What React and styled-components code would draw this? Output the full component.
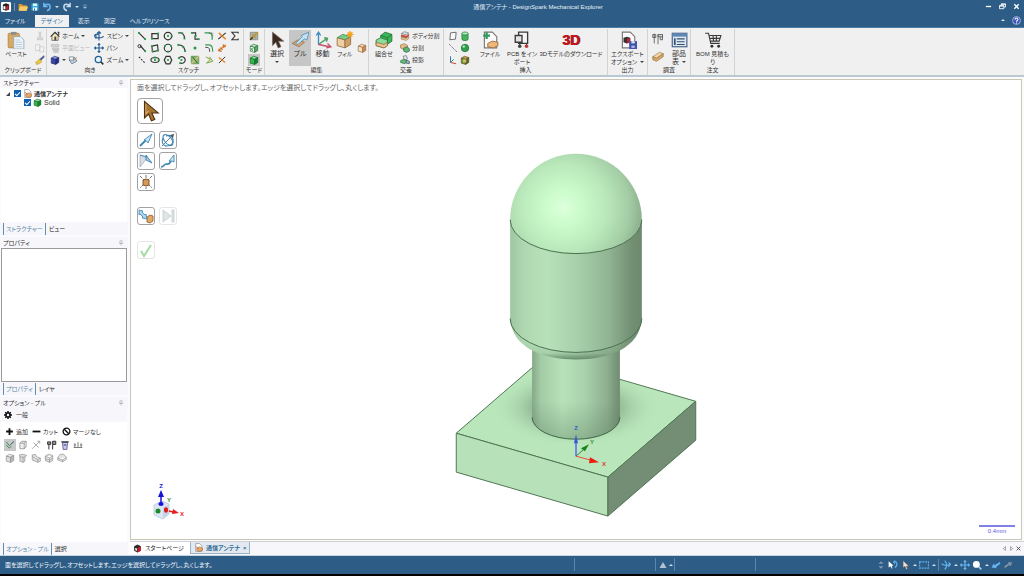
import React, { useState } from "react";
import styled, { createGlobalStyle, ThemeProvider } from "styled-components";

const theme = {
  blue: "#2d5d87",
  ribbon: "#f0f0f0",
  line: "#d2d2d2",
  panel: "#f7f6fa",
  ink: "#303030",
  font: '"Liberation Sans", "Noto Sans CJK JP", sans-serif',
};

const Global = createGlobalStyle`
  * { box-sizing: border-box; }
  body { margin: 0; background: #000; }
  body, button, input {
    font-family: ${theme.font};
    font-size: 7px;
    line-height: 8px;
    font-feature-settings: "palt";
    color: ${theme.ink};
  }
  button { border: 0; background: none; padding: 0; margin: 0; white-space: nowrap; }
  h1, h2, h3, p, ul { margin: 0; padding: 0; font-size: inherit; font-weight: normal; }
`;

/* ---------- icons ---------- */

const G = "#2f9a50";
const K = "#333";
const B = "#3c86b4";
const O = "#e8872e";

const cube = (a, b, c, s) => (
  <g stroke={s} strokeWidth="1" strokeLinejoin="round">
    <path d="M2 5 7 2l7 2-5 3z" fill={a} />
    <path d="M2 5l7 2v8l-7-2z" fill={b} />
    <path d="M9 7l5-3v8l-5 3z" fill={c} />
  </g>
);
const ends = (pts) => pts.map(([x, y]) => <rect key={`${x}-${y}`} x={x - 1.5} y={y - 1.5} width="3" height="3" fill={G} />);
const page = <path d="M3 1h7l4 4v10H3z" fill="#fdfdfd" stroke="#777" />;

const drawings = {
  app: <><rect width="16" height="16" rx="2" fill="#fff" /><path d="M3 4l5-2 5 2v8l-5 2-5-2z" fill="#222" /><path d="M8 7l4-2v6l-4 2z" fill="#c3202f" /><path d="M4 6l3 1v5l-3-1z" fill="#fff" /></>,
  folder: <><path d="M1 3h5l2 2h6v9H1z" fill="#d9962c" /><path d="M3 7h13l-2 7H1z" fill="#f8cb6a" /></>,
  save: <><path d="M1 1h14v14H1z" fill="#35aee8" /><path d="M4 1h8v5H4z" fill="#e7f6ff" /><path d="M4 9h8v6H4z" fill="#fff" /><path d="M6 11h2v4H6z" fill="#357" /></>,
  undo: <path d="M3 1v6h6M3 7c4-5 10-4 10 1 0 3-2 5-5 6" fill="none" stroke="#6db8f2" strokeWidth="2.4" />,
  redo: <path d="M13 1v6H7M13 7C9 2 3 3 3 8c0 3 2 5 5 6" fill="none" stroke="#c9dcec" strokeWidth="2.4" />,
  customise: <path d="M3 3h10M4 8l4 4 4-4z" fill="#a9c2d6" stroke="#a9c2d6" strokeWidth="1.5" />,
  minimise: <path d="M2 8h12" stroke="#fff" strokeWidth="3" />,
  restore: <path d="M5 6V2h10v7h-4M1 6h10v7H1zM1 7h10M5 3h10" fill="none" stroke="#fff" strokeWidth="2" />,
  close: <path d="M3 3l10 10M13 3L3 13" stroke="#fff" strokeWidth="3" />,
  help: <><circle cx="8" cy="8" r="7" fill="#3b55b8" stroke="#a9b6e8" strokeWidth="1.6" /><path d="M5.5 6.5c0-4 5.500-3.500 5 0-.2 1.500-2.500 1.500-2.500 3.500M8 11.500v1.800" stroke="#fff" strokeWidth="1.800" fill="none" /></>,
  paste: <><rect x="1" y="2" width="10" height="13" rx="1" fill="#d9a860" stroke="#a8783a" strokeWidth=".6" /><rect x="3.500" y=".8" width="5" height="2.600" fill="#8d8d8d" /><path d="M6 5h6l3 3v8H6z" fill="#eef5fb" stroke="#8aa4ba" strokeWidth=".7" /><path d="M7.500 8h4M7.500 10h6M7.500 12h6M7.500 14h6" stroke="#a8bfd2" strokeWidth=".7" /></>,
  cut: <path d="M6 1l4 9M10 1L6 10M4 11h3v3H4zM9 11h3v3H9z" fill="none" stroke="#c4c4c4" strokeWidth="1.500" />,
  copy: <path d="M1 3h7v9H1zM7 6h7v8H7z" fill="#f5f5f5" stroke="#c8c8c8" strokeWidth="1.200" />,
  brush: <><path d="M14 1l1 2-6 6-2-2z" fill="#4a5fb0" stroke="#333" strokeWidth=".6" /><path d="M7 6l4 4c-2 4-6 5-9 5 0-2 0-3-1-4 3 0 4-2 6-5z" fill="#ecc63c" stroke="#a1821b" strokeWidth=".7" /></>,
  home: <><path d="M1 9l7-7 7 7M12 2h2v4" fill="none" stroke="#333" strokeWidth="1.800" /><path d="M3 8l5-5 5 5v7H3z" fill="#f4e5b9" stroke="#444" /><path d="M7 9h3v6H7z" fill="#444" /></>,
  planView: <path d="M2 2h12v4H2zM4 8h10v3H4zM6 12h7v3H6z" fill="#d4d4d4" stroke="#b4b4b4" />,
  blueCube: cube("#8c97e6", "#3a45ac", "#232c7c", "#20286c"),
  photo: <><path d="M2 8l9-4 3 6-8 4z" fill="#bcd5ea" stroke="#456" /><path d="M2 3h7v5H2z" fill="#f1f4f8" stroke="#567" /><path d="M8 9l6-5" stroke="#c58a36" strokeWidth="1.500" /></>,
  spin: <path d="M8 1v14M5 4l3-3 3 3M15 8c0 3-5 3-8 3s-6-1-6-3 3-3 6-3M5 8L1 8l2 4" fill="none" stroke="#245f93" strokeWidth="1.800" />,
  pan: <path d="M8 1v14M1 8h14M6 3l2-2 2 2M6 13l2 2 2-2M3 6L1 8l2 2M13 6l2 2-2 2" fill="none" stroke="#245f93" strokeWidth="1.800" />,
  zoom: <><circle cx="7" cy="7" r="5" fill="#e8f4fc" stroke="#245f93" strokeWidth="2" /><path d="M11 11l4 4" stroke="#333" strokeWidth="2.400" /></>,

  line: <><path d="M3 3l10 10" stroke={K} strokeWidth="2" />{ends([[3, 3], [13, 13]])}</>,
  rect: <><path d="M3 4h10v8H3z" fill="none" stroke={K} strokeWidth="2" />{ends([[3, 12], [13, 4]])}</>,
  circleDot: <><circle cx="8" cy="8" r="6" fill="none" stroke={K} strokeWidth="2" />{ends([[8, 8], [14, 8]])}</>,
  tangent: <><path d="M2 3c6-1 10 2 10 9" fill="none" stroke={K} strokeWidth="1.800" /><path d="M2 3h8" stroke={G} strokeWidth="1.600" />{ends([[12, 12]])}</>,
  spline: <><path d="M3 3h6v5H8v5h6" fill="none" stroke={K} strokeWidth="1.800" />{ends([[3, 3], [9, 8], [14, 13]])}</>,
  corner: <><path d="M1 3h6c4 0 6 2 6 6v5" fill="none" stroke={G} strokeWidth="2" /><path d="M8 3h6v5" fill="none" stroke={K} strokeDasharray="1.500 1.500" /></>,
  trim: <><path d="M2 13L14 3" stroke={K} strokeWidth="1.800" /><path d="M3 3l5 5 6 5" stroke={O} strokeWidth="2.600" /></>,
  sigma: <path d="M13 4V2H3l5 6-5 6h10v-2" fill="none" stroke={K} strokeWidth="1.800" />,
  tanLine: <><path d="M5 4l8 9" stroke={K} strokeWidth="2" /><circle cx="4" cy="5" r="2.500" fill="none" stroke={K} strokeWidth="1.500" />{ends([[13, 13]])}</>,
  rect3: <><path d="M3 5l9-2 1 9-9 2z" fill="none" stroke={K} strokeWidth="1.800" />{ends([[3, 5], [13, 12], [4, 13]])}</>,
  circle3: <><circle cx="8" cy="8" r="6" fill="none" stroke={K} strokeWidth="1.800" />{ends([[3, 5], [13, 5], [8, 14]])}</>,
  arc: <><path d="M2 3c7 0 10 4 11 10" fill="none" stroke={K} strokeWidth="1.800" />{ends([[2, 3], [10, 6], [13, 13]])}</>,
  point: <circle cx="8" cy="8" r="2.500" fill={G} />,
  offset: <><path d="M2 3h6c4 0 6 2 6 11" fill="none" stroke={G} strokeWidth="1.800" /><path d="M2 7h3c3 0 4 2 4 7" fill="none" stroke={K} strokeWidth="1.400" /></>,
  split: <><path d="M2 13L14 3" stroke={O} strokeWidth="2.600" /><path d="M5 7l4 4M10 2v4h4M3 9l1 4h4" fill="none" stroke="#b05a18" strokeWidth="1.400" /></>,
  dashLine: <path d="M3 3l10 10" stroke={K} strokeWidth="1.800" strokeDasharray="3 2" />,
  ellipse: <><ellipse cx="8" cy="8" rx="6.500" ry="4" fill="none" stroke={K} strokeWidth="1.800" />{ends([[8, 8], [8, 4], [14, 8]])}</>,
  polygon: <><path d="M5 2h6l3 6-3 6H5L2 8z" fill="none" stroke={K} strokeWidth="2" />{ends([[8, 8]])}</>,
  sweep: <><path d="M3 5c4-5 11-1 10 4-1 4-5 5-8 4" fill="none" stroke={K} strokeWidth="1.800" />{ends([[3, 5], [7, 8], [5, 13]])}</>,
  project: <><path d="M2 2h12v12H2z" fill="#8dbb78" stroke="#3e7a38" /><path d="M2 14L14 2" stroke="#d8c070" strokeWidth="2" /><path d="M4 3l8 10" stroke="#2c5a28" strokeWidth="1.600" /></>,
  bend: <path d="M3 3l7 4-6 6 10-3-5-7" fill="#dcebaf" stroke="#78a04a" strokeWidth="1.500" />,
  scaleTrim: <><path d="M3 13L13 3" stroke={K} strokeWidth="1.600" /><path d="M3 4l10 8" stroke={O} strokeWidth="2.400" /></>,

  modeSketch: <><path d="M2 2h12v12H2z" fill="#b7c0a6" stroke="#777" /><path d="M2 6h12M2 10h12M6 2v12M10 2v12" stroke="#787878" strokeWidth=".6" /><path d="M2 14L14 2" stroke="#c99420" strokeWidth="2.600" /><path d="M2 14l4-4" stroke="#333" strokeWidth="2" /></>,
  modeSection: <>{cube("#bfe8c6", "#fff", "#5aa868", "#236b35")}<path d="M3 12l5-5M3 8l3 5" stroke="#2b8a43" strokeWidth="1.400" /></>,
  modeSolid: cube("#8fe09c", "#30b84b", "#16802d", "#0f6323"),
  select: <path d="M4 1v12l3-3 2 5 2.500-1-2.200-5H14z" fill="#3b2a22" stroke="#7a6a60" strokeWidth=".7" />,
  pull: <><path d="M1 11l5-3 6 2-5 4z" fill="#d9a878" stroke="#9b6a3c" strokeWidth=".7" /><path d="M4 11l6-6-1-1 7-3-2 7-2-1-6 5z" fill="#c3e3f4" stroke="#4a88ae" strokeWidth=".7" /></>,
  move: <><path d="M4 12V2M2 4l2-3 2 3" fill="none" stroke="#3f8cc0" strokeWidth="1.200" /><path d="M4 12l7-5M9 6l3 .5-1 3" fill="none" stroke="#47a05b" strokeWidth="1.200" /><path d="M4 12l10 2M12 11l3 3-4 1" fill="none" stroke="#c9506a" strokeWidth="1.200" /></>,
  fill: <><path d="M1 6l5-3 7 2-5 3z" fill="#74cf84" stroke="#3b8049" strokeWidth=".7" /><path d="M1 6l7 2v7l-7-2z" fill="#f0cfa4" stroke="#8c6840" strokeWidth=".7" /><path d="M8 8l5-3v7l-5 3z" fill="#cf9f68" stroke="#8c6840" strokeWidth=".7" /><path d="M12.500 0v6M9.500 3h6M10.500 1l4 4M14.500 1l-4 4" stroke="#f5a11c" strokeWidth="1.100" /></>,
  tanCube: cube("#f6d8b2", "#f3e0c8", "#c98f52", "#9a6230"),
  combine: <><path d="M5 4l4-3 6 2v6l-4 3-6-2z" fill="#39b557" stroke="#1f6d32" strokeWidth=".7" /><path d="M5 4l6 2 4-3M11 6v6" fill="none" stroke="#1f6d32" strokeWidth=".7" /><path d="M1 8l4-2 6 2v5l-3 2-7-2z" fill="#8bdc98" stroke="#226f35" strokeWidth=".7" /><path d="M1 10l7 2 3-2v3l-3 2-7-2z" fill="#efc392" stroke="#8c6840" strokeWidth=".7" /></>,
  splitBody: <><path d="M2 4l5-3 7 2-4 3z" fill="#d3dde6" stroke="#555" strokeWidth=".8" /><path d="M2 6l8 2 4-3v3l-4 3-8-2z" fill="#d8543c" stroke="#8a3424" strokeWidth=".7" /><path d="M2 10l8 2 4-3v3l-4 3-8-2z" fill="#f0cfa4" stroke="#7c5c38" strokeWidth=".8" /></>,
  splitFace: <><path d="M1 3l6-2 5 3v5l-5 2-6-3z" fill="#e7ba80" stroke="#7c5c38" strokeWidth=".9" /><path d="M6 8l5-2 4 3v4l-5 2-4-2z" fill="#58ba6a" stroke="#245" strokeWidth=".9" /></>,
  projectCurve: <><path d="M5 2l5-1 2 5-5 2z" fill="#e4ecf3" stroke="#556" /><path d="M1 9l5-2 6 3-4 4-7-2z" fill="#63bd76" stroke="#24643a" /><path d="M10 8l5 2v4l-5-1z" fill="#9db7d0" stroke="#345" /></>,
  plane: <path d="M4 3l9-1-1 11-9 1z" fill="#fdfdfd" stroke="#444" strokeWidth="1.200" />,
  axis: <path d="M2 2l12 12" stroke="#456" strokeWidth="1.500" strokeDasharray="3 1.500 1 1.500" />,
  origin: <><path d="M4 2v10" stroke="#3478b8" strokeWidth="1.600" /><path d="M4 12l9 2" stroke="#c64a4a" strokeWidth="1.600" /><path d="M4 12l5-5" stroke={G} strokeWidth="1.600" /></>,
  cylinder: <><path d="M3 4v9c0 3 10 3 10 0V4z" fill="#43b45c" stroke="#1d6a31" /><ellipse cx="8" cy="4" rx="5" ry="2.500" fill="#a8e8b4" stroke="#1d6a31" /></>,
  sphere: <><circle cx="8" cy="8" r="6" fill="#2fa04a" stroke="#19602c" /><circle cx="6" cy="5.500" r="2" fill="#a8e8b4" /></>,
  shell: <>{cube("#c6a35a", "#6f9a3c", "#4c6b28", "#5b4a1c")}<rect x="5" y="7" width="5" height="5" fill="#d9b768" /></>,
  fileInsert: <>{page}<path d="M5 1v6M2 4h6" stroke="#2d9c58" strokeWidth="2" /><path d="M6 11l4-2 5 1v3l-4 2-5-1z" fill="#f0b878" stroke="#9b6a3c" strokeWidth=".8" /></>,
  pcb: <><path d="M5 1h8v10H5z" fill="#f6f6f6" stroke="#3a3a3a" strokeWidth="1.200" /><path d="M2 4h6v6H2z" fill="#e4e4e4" stroke="#3a3a3a" strokeWidth="1.200" /><path d="M6 10v3M12 11v2" stroke="#3a3a3a" /><circle cx="6" cy="13.500" r="1.600" fill="#444" /><circle cx="12" cy="13.500" r="1.600" fill="#b33" /></>,
  exportOpts: <>{page}<path d="M4 6l3-1 3 1v4l-3 1-3-1z" fill="#333" /><path d="M7 7l3-1v4l-3 1z" fill="#c3202f" /><path d="M9 9h7v7H9z" fill="#4355a8" /><path d="M11 9h3v2h-3z" fill="#dfe4f6" /><path d="M11 13h3v2h-3z" fill="#aeb9e4" /></>,
  caliper: <path d="M3 1v13M3 2H1v4h4V2zM8 2h6v3H8zM8 2v13M11 5v4h3V2" fill="#d9dde0" stroke="#555" strokeWidth="1.100" />,
  mass: <><path d="M1 9l9-6 5 2-9 6z" fill="#f4d7a8" stroke="#8c6840" strokeWidth=".8" /><path d="M1 9l5 2 9-6v4l-9 6-5-2z" fill="#d9aa68" stroke="#8c6840" strokeWidth=".8" /></>,
  partsTable: <><rect x="2" y="2" width="13" height="12" fill="#dfe8f2" stroke="#3f5f86" /><path d="M2 2h13v3H2z" fill="#5e86b5" /><path d="M6 7h7M6 9.500h7M6 12h7" stroke="#34506f" /><path d="M3.500 6.500H5v6H3.500z" fill="#34506f" /></>,
  cart: <><path d="M1 2h3l2 9h8M4.500 4H15l-1.500 5H6M8 4l.5 5M11 4v5M5 6.500h9" fill="none" stroke="#3c3c3c" strokeWidth="1" /><circle cx="7" cy="13.500" r="1.300" fill="#333" /><circle cx="13" cy="13.500" r="1.300" fill="#333" /></>,

  pin: <path d="M5 2h6v7H5zM3 9h10M8 9v6" fill="none" stroke="#999" strokeWidth="1.300" />,
  partDoc: <>{page}<path d="M5 9l5-2 5 2v4l-5 2-5-2z" fill="#eda866" stroke="#8c5a2c" strokeWidth=".9" /><path d="M3 6l5 3" stroke="#b44" /></>,
  startDoc: <><path d="M2 4l6-3 6 3v8l-6 3-6-3z" fill="#2b2b2b" /><path d="M8 7l6-3v8l-6 3z" fill="#c3202f" /><path d="M4 7l3 1v4l-3-1z" fill="#fff" /></>,
  gear: <><path d="M8 0v16M0 8h16M2.500 2.500l11 11M13.500 2.500l-11 11" stroke="#111" strokeWidth="3" /><circle cx="8" cy="8" r="5.500" fill="#111" /><circle cx="8" cy="8" r="2.500" fill="#f7f6fa" /></>,
  plus: <path d="M8 2v12M2 8h12" stroke="#111" strokeWidth="3.200" />,
  minus: <path d="M1 8h14" stroke="#111" strokeWidth="3.200" />,
  ban: <><circle cx="8" cy="8" r="6" fill="none" stroke="#111" strokeWidth="2.400" /><path d="M4 4l8 8" stroke="#111" strokeWidth="2.400" /></>,
  optArrow: <><path d="M2 3l5 6 7-6M2 8l5 5 3-3" fill="none" stroke="#3f8a58" strokeWidth="1.600" /><path d="M8 8l6-6" stroke="#5a6f9c" strokeWidth="1.600" /></>,
  optCube: <path d="M3 5h7v9H3zM3 5l3-3h7l-3 3M13 2v9l-3 3" fill="#eee" stroke="#8a8a8a" strokeWidth="1.200" />,
  optCross: <path d="M2 14L14 2M4 4l8 8M10 2l4 0v4" fill="none" stroke="#a4a4a4" strokeWidth="1.400" />,
  optMeasure: <><path d="M1 3h5v4H1zM3 7v8M9 2h5v5H9zM9 7v8" fill="#999" stroke="#333" strokeWidth="1.600" /></>,
  optBucket: <><path d="M4 4h8l-1 11H5z" fill="#c9ccec" stroke="#4a4f88" strokeWidth="1.300" /><path d="M2 3h12" stroke="#333" strokeWidth="2" /><path d="M6 8h4" stroke="#4a4f88" strokeWidth="2" /></>,
  optScale: <path d="M1 12h14M3 12V5M8 12V3M13 12V5M1 8h4M11 8h4" stroke="#777" strokeWidth="1.500" />,
  grey1: cube("#ececec", "#dcdcdc", "#bababa", "#888"),
  grey2: <><path d="M2 3l7-1 5 2-3 2v7l-3 2-5-2V6z" fill="#dedede" stroke="#8a8a8a" /><path d="M8 7v8M3 6l5 1 3-1" fill="none" stroke="#8a8a8a" /></>,
  grey3: <path d="M2 3l5-1 2 4 6 2v5l-4 2-9-4zM2 6l9 4 4-2M11 10v5" fill="#dedede" stroke="#8a8a8a" />,
  grey4: <path d="M2 5l5-3 7 2v8l-5 3-7-3zM2 5l7 3 5-4M9 8v7M2 9l7 2 5-3" fill="#dedede" stroke="#8a8a8a" />,
  grey5: <path d="M5 2h6l4 5v3l-6 4-8-3V8zM1 8l8 3 6-4M9 11v3" fill="#e4e4e4" stroke="#8a8a8a" />,

  bigSelect: <><path d="M4 1v12l3-2.800 2 5 2.500-1-2.200-4.800H14z" fill="#a87434" stroke="#4e3214" strokeWidth=".8" /><path d="M5 3v7l2-2" fill="none" stroke="#d8a864" strokeWidth=".8" /></>,
  tPull: <><path d="M2 14l6-6" stroke={B} strokeWidth="1.800" /><path d="M6 8l8-6-4 9-1.500-2z" fill="#cfe8f5" stroke={B} strokeWidth=".9" /></>,
  tRevolve: <><path d="M2 14L14 2" stroke="#555" strokeWidth=".8" /><ellipse cx="8" cy="8" rx="6.500" ry="3.500" transform="rotate(50 8 8)" fill="none" stroke={B} strokeWidth="1.100" /><path d="M3 6c-2 4 0 8 4 8s7-3 6-7-5-4-7-3" fill="none" stroke={B} strokeWidth="1.100" /><path d="M14 2l-4 1 3 3z" fill="#555" /></>,
  tDraft: <><path d="M2 2v12L9 5z" fill="#d9dde4" stroke="#9aa4b0" strokeWidth=".7" /><path d="M2 2l7 2M8 2l6 8-6-3z" fill="#9ccbe4" stroke={B} strokeWidth=".9" /></>,
  tSweep: <><path d="M1 14c3 0 3-3 5-3s3 1 5-3" fill="none" stroke={B} strokeWidth="1.700" /><path d="M9 8l5-6v7l-2-1z" fill="#cfe8f5" stroke={B} strokeWidth=".9" /></>,
  tScale: <><path d="M2 2l12 12M14 2L2 14M8 1v14" stroke="#666" strokeWidth=".9" strokeDasharray="3 1" /><path d="M5 6l3-1 3 1v5l-3 1-3-1z" fill="#d59858" stroke="#7c4c1c" strokeWidth=".9" /></>,
  tUpTo: <><path d="M9 9l3-2 3 1v5l-3 2-3-1z" fill="#e2a765" stroke="#8c5a2c" strokeWidth=".8" /><path d="M1 2l4 1-1 1 3 3 1-1 1 5-5-1 1-1-3-3-1 1z" fill="#a9d4ea" stroke={B} strokeWidth=".8" /></>,
  tNext: <path d="M3 2v12l8-6zM12 2h2v12h-2z" fill="#dfe4e4" stroke="#c3cccc" strokeWidth=".8" />,
  tDone: <path d="M3 9l3 5L13 3" fill="none" stroke="#a5dba4" strokeWidth="2" />,

  navLeft: <path d="M11 2v12L4 8z" fill="#fff" stroke="#555" strokeWidth="1.600" />,
  navRight: <path d="M5 2v12l7-6z" fill="#fff" stroke="#555" strokeWidth="1.600" />,
  navClose: <path d="M2 2l12 12M14 2L2 14" stroke="#444" strokeWidth="2.800" />,
  updown: <path d="M4 6l4-4 4 4zM4 10l4 4 4-4z" fill="#7f9bb3" />,
  sArrowBack: <><path d="M1 2v10l3-2 2 4 1-1-1-4h3z" fill="#fff" /><path d="M9 3c6-2 7 6 2 9M12 1L9 3l2 3" fill="none" stroke="#65b4ee" strokeWidth="1.800" /></>,
  sArrow: <path d="M5 1v11l3-2 2 5 2-1-2-4h4z" fill="#f0e4d8" stroke="#6c5648" strokeWidth=".7" />,
  sBox: <rect x="1" y="3" width="14" height="10" fill="none" stroke="#65b4ee" strokeWidth="1.700" strokeDasharray="3 1.500" />,
  sSpin: <path d="M6 1c4 3 4 11 0 14M1 6c4 3 10 3 14 1M12 4l3 3-3 4" fill="none" stroke="#65b4ee" strokeWidth="2" />,
  sPan: <path d="M8 1v14M1 8h14M6 3l2-2 2 2M6 13l2 2 2-2M3 6L1 8l2 2M13 6l2 2-2 2" fill="none" stroke="#65b4ee" strokeWidth="1.900" />,
  sZoom: <><circle cx="7" cy="7" r="5.500" fill="#fff" /><path d="M11 11l4 4" stroke="#9dd0f4" strokeWidth="2.600" /></>,
  sPrev: <path d="M1 12l3-6 2 2 8-5 1 3-7 5 1 2z" fill="#65b4ee" />,
  sNext: <path d="M15 4l-3 6-2-2-7 5-1-3 7-5-1-2z" fill="#7f93a5" />,
  warn: <path d="M8 2l7 12H1z" fill="#b4c2ce" />,
};

const Svg = styled.svg`
  display: block;
  flex: none;
  width: ${(p) => p.$size}px;
  height: ${(p) => p.$size}px;
`;
const Icon = ({ name, size = 10 }) => (
  <Svg $size={size} viewBox="0 0 16 16" aria-hidden="true">{drawings[name]}</Svg>
);

const Caret = styled.span`
  flex: none;
  border: 2px solid transparent;
  border-${(p) => (p.$up ? "bottom" : "top")}-color: ${(p) => (p.$light ? "#d5e2ee" : "#444")};
  border-${(p) => (p.$up ? "top" : "bottom")}-width: 0;
`;

/* ---------- frame ---------- */

const Window = styled.div`
  display: flex;
  flex-direction: column;
  min-height: 100vh;
  border-bottom: 2px solid #000;
  background: #fbfbfd;
`;
const Header = styled.header`
  background: ${(p) => p.theme.blue};
  color: #e6eef5;
  border-bottom: 1px solid #4d7fa6;
`;
const TitleRow = styled.div`
  display: grid;
  grid-template-columns: 1fr auto 1fr;
  align-items: center;
  height: 13px;
  padding-right: 4px;
`;
const Title = styled.h1`
  padding-left: 56px;
  font-size: 6px;
  white-space: nowrap;
`;
const QuickBar = styled.div`
  display: flex;
  align-items: center;
  gap: 3px;
  padding-left: 1px;
`;
const QuickDivider = styled.span`
  width: 1px;
  height: 8px;
  background: #6f93b1;
`;
const WindowButtons = styled.div`
  display: flex;
  justify-content: flex-end;
  gap: 7px;
`;
const IconButton = styled.button`
  display: flex;
  align-items: center;
  justify-content: center;
  gap: 3px;
`;
const TabRow = styled.div`
  display: flex;
  align-items: flex-end;
  height: 14px;
  padding-right: 3px;
`;
const RibbonTab = styled.button`
  height: 12px;
  padding: 0 ${(p) => (p.$active ? 6 : 5)}px;
  font-size: 6px;
  color: ${(p) => (p.$active ? "#2d6ea3" : "#e6eef5")};
  background: ${(p) => (p.$active ? p.theme.ribbon : "none")};
  margin-right: 4px;
`;
const TabTools = styled.div`
  display: flex;
  gap: 7px;
  align-self: center;
  margin-left: auto;
`;

/* ---------- ribbon ---------- */

const Ribbon = styled.div`
  display: flex;
  height: 49px;
  padding-top: 1px;
  background: ${(p) => p.theme.ribbon};
  border-bottom: 2px solid #b9c9d3;
`;
const Group = styled.section`
  display: flex;
  flex-direction: column;
  flex: none;
  width: ${(p) => p.$width}px;
  border-right: 1px solid ${(p) => p.theme.line};
`;
const GroupBody = styled.div`
  display: flex;
  flex: 1;
  padding-top: 1px;
  justify-content: ${(p) => p.$justify || "space-between"};
`;
const GroupName = styled.h2`
  height: 9px;
  text-align: center;
  white-space: nowrap;
  font-size: 6px;
`;
const Big = styled.button`
  display: flex;
  flex-direction: column;
  align-items: center;
  flex: none;
  width: ${(p) => p.$width || 22}px;
  font-size: ${(p) => (p.$small ? 6 : 7)}px;
  background: ${(p) => (p.$on ? "#c6c6c6" : "none")};
  white-space: pre;
  svg { margin: 1px 0; }
`;
const BigLine = styled.span`
  display: flex;
  align-items: center;
  height: 8px;
  gap: 3px;
`;
const Stack = styled.div`
  display: grid;
  grid-template-columns: repeat(${(p) => p.$cols || 1}, auto);
  grid-template-rows: ${(p) => (p.$pair ? "repeat(2, 17px)" : "repeat(3, 12px)")};
  align-content: start;
  align-items: center;
  justify-items: ${(p) => p.$align || "center"};
  flex: ${(p) => (p.$grow ? 1 : "none")};
  padding: 0 ${(p) => p.$pad || 0}px;
`;
const Small = styled.button`
  display: flex;
  align-items: center;
  gap: 2px;
  height: 12px;
  padding: 0 1px;
  font-size: 6px;
  color: ${(p) => (p.$off ? "#b8b8b8" : p.theme.ink)};
  background: ${(p) => (p.$on ? "#c6c6c6" : "none")};
`;
const Mark3D = styled.strong`
  display: block;
  height: 18px;
  margin: 1px 0;
  padding: 1px 2px;
  font-size: 14px;
  line-height: 16px;
  color: #c3161c;
  text-shadow: 1px 0 0 #8d0f14;
`;

const BigButton = ({ icon, lines, caret, mark, ...rest }) => (
  <Big {...rest}>
    {mark ? <Mark3D>{mark}</Mark3D> : <Icon name={icon} size={18} />}
    {lines.map((l, i) => (
      <BigLine key={l}>{l}{caret && i === lines.length - 1 && i > 0 && <Caret />}</BigLine>
    ))}
    {caret && lines.length === 1 && <BigLine><Caret /></BigLine>}
  </Big>
);
const IconSet = ({ names }) => names.map((n) => <Small key={n} aria-label={n}><Icon name={n} /></Small>);

const sketchTools = [
  "line", "rect", "circleDot", "tangent", "spline", "corner", "trim", "sigma",
  "tanLine", "rect3", "circle3", "arc", "point", "offset", "split", null,
  "dashLine", "ellipse", "polygon", "sweep", "project", "bend", "scaleTrim", null,
];

function RibbonBar() {
  return (
    <Ribbon>
      <Group $width={47}>
        <GroupBody>
          <BigButton icon="paste" lines={["ペースト"]} $width={32} $small />
          <Stack $pad={2}><IconSet names={["cut", "copy", "brush"]} /></Stack>
        </GroupBody>
        <GroupName>クリップボード</GroupName>
      </Group>
      <Group $width={87}>
        <GroupBody $justify="flex-start">
          <Stack $align="start" $pad={2}>
            <Small><Icon name="home" />ホーム<Caret /></Small>
            <Small $off disabled><Icon name="planView" />平面ビュー</Small>
            <Small><Icon name="blueCube" /><Caret /><Icon name="photo" /></Small>
          </Stack>
          <Stack $align="start">
            <Small><Icon name="spin" />スピン<Caret /></Small>
            <Small><Icon name="pan" />パン</Small>
            <Small><Icon name="zoom" />ズーム<Caret /></Small>
          </Stack>
        </GroupBody>
        <GroupName>向き</GroupName>
      </Group>
      <Group $width={110}>
        <GroupBody>
          <Stack $cols={8} $grow $pad={1}>
            {sketchTools.map((n, i) => (n ? <Small key={n} aria-label={n}><Icon name={n} /></Small> : <span key={i} />))}
          </Stack>
        </GroupBody>
        <GroupName>スケッチ</GroupName>
      </Group>
      <Group $width={21}>
        <GroupBody $justify="center">
          <Stack>
            <Small aria-label="スケッチモード"><Icon name="modeSketch" /></Small>
            <Small aria-label="断面モード"><Icon name="modeSection" /></Small>
            <Small $on aria-label="3Dモード"><Icon name="modeSolid" /></Small>
          </Stack>
        </GroupBody>
        <GroupName>モード</GroupName>
      </Group>
      <Group $width={104}>
        <GroupBody>
          <BigButton icon="select" lines={["選択"]} caret $width={24} />
          <BigButton icon="pull" lines={["プル"]} $on />
          <BigButton icon="move" lines={["移動"]} />
          <BigButton icon="fill" lines={["フィル"]} $small />
          <Stack><span /><Small aria-label="ブレンド"><Icon name="tanCube" /></Small></Stack>
        </GroupBody>
        <GroupName>編集</GroupName>
      </Group>
      <Group $width={75}>
        <GroupBody>
          <BigButton icon="combine" lines={["組合せ"]} $width={30} $small />
          <Stack $align="start" $grow>
            <Small><Icon name="splitBody" />ボディ分割</Small>
            <Small><Icon name="splitFace" />分割</Small>
            <Small><Icon name="projectCurve" />投影</Small>
          </Stack>
        </GroupBody>
        <GroupName>交差</GroupName>
      </Group>
      <Group $width={164}>
        <GroupBody $justify="flex-start">
          <Stack $cols={2} $pad={3}>
            <IconSet names={["plane", "cylinder", "axis", "sphere", "origin", "shell"]} />
          </Stack>
          <BigButton icon="fileInsert" lines={["ファイル"]} $width={32} $small />
          <BigButton icon="pcb" lines={["PCB をイン", "ポート"]} $width={32} $small />
          <BigButton mark="3D" lines={["3Dモデルのダウンロード"]} $width={66} $small />
        </GroupBody>
        <GroupName>挿入</GroupName>
      </Group>
      <Group $width={40}>
        <GroupBody $justify="center">
          <BigButton icon="exportOpts" lines={["エクスポート", "オプション"]} caret $width={38} $small />
        </GroupBody>
        <GroupName>出力</GroupName>
      </Group>
      <Group $width={43}>
        <GroupBody>
          <Stack $pad={3} $pair>
            <Small aria-label="測定"><Icon name="caliper" size={12} /></Small>
            <Small aria-label="質量"><Icon name="mass" size={12} /></Small>
          </Stack>
          <BigButton icon="partsTable" lines={["部品", "表"]} caret />
        </GroupBody>
        <GroupName>調査</GroupName>
      </Group>
      <Group $width={44}>
        <GroupBody $justify="center">
          <BigButton icon="cart" lines={["BOM 見積も", "り"]} $width={40} $small />
        </GroupBody>
        <GroupName>注文</GroupName>
      </Group>
    </Ribbon>
  );
}

/* ---------- side panels ---------- */

const Work = styled.div`
  display: flex;
  flex: 1;
`;
const Sidebar = styled.aside`
  display: flex;
  flex-direction: column;
  flex: none;
  width: 128px;
  gap: 2px;
`;
const Panel = styled.section`
  display: flex;
  flex-direction: column;
  flex: 1;
`;
const PanelHead = styled.header`
  display: flex;
  align-items: center;
  justify-content: space-between;
  height: 11px;
  padding: 0 4px 0 3px;
  font-size: 6px;
  background: ${(p) => p.theme.panel};
`;
const PanelBody = styled.div`
  flex: 1;
  background: #fff;
  border: ${(p) => (p.$framed ? "1px solid #9a9a9a" : "0")};
  margin: 0 1px;
`;
const PanelTabs = styled.div`
  display: flex;
  align-items: center;
  height: 13px;
  padding-left: 3px;
  background: ${(p) => p.theme.panel};
`;
const PanelTab = styled.button`
  height: 12px;
  padding: 0 ${(p) => (p.$active ? 2 : 3)}px;
  font-size: 6px;
  color: ${(p) => (p.$active ? "#5a86a6" : "#222")};
  border: solid #5f8fae;
  border-width: 0 ${(p) => (p.$active ? "1px 0 1px" : "0")};
`;
const Tree = styled.ul`
  list-style: none;
  padding: 1px 5px;
`;
const TreeRow = styled.li`
  display: flex;
  align-items: center;
  height: 9px;
  padding-left: ${(p) => p.$indent}px;
  font-size: ${(p) => (p.$bold ? 6 : 7)}px;
  font-weight: ${(p) => (p.$bold ? "bold" : "normal")};
  label { display: flex; align-items: center; gap: 2px; }
`;
const Twisty = styled.span`
  border-left: 4px solid transparent;
  border-bottom: 4px solid #444;
  margin-right: 4px;
`;
const Check = styled.input`
  appearance: none;
  width: 7px;
  height: 7px;
  margin: 0;
  background: #0f5fb4;
  display: grid;
  place-items: center;
  &::after {
    content: "";
    width: 4px;
    height: 2px;
    border: solid #fff;
    border-width: 0 0 1px 1px;
    rotate: -45deg;
  }
`;
const Section = styled.h3`
  display: flex;
  align-items: center;
  gap: 4px;
  height: 14px;
  padding-left: 3px;
  font-size: 6px;
  background: ${(p) => p.theme.panel};
`;
const OptionRow = styled.div`
  display: flex;
  align-items: center;
  gap: ${(p) => p.$gap}px;
  height: 13px;
  padding-left: 3px;
`;
const Options = styled.div`
  padding-top: 3px;
`;
const OptionButton = styled.button`
  display: flex;
  align-items: center;
  gap: 2px;
  padding: 1px;
  font-size: 6px;
  background: ${(p) => (p.$on ? "#c8c8c8" : "none")};
`;

const Pinned = ({ children }) => <PanelHead><h2>{children}</h2><Icon name="pin" size={6} /></PanelHead>;
const Tabs = ({ items }) => (
  <PanelTabs role="tablist">
    {items.map((t, i) => <PanelTab key={t} role="tab" aria-selected={i === 0} $active={i === 0}>{t}</PanelTab>)}
  </PanelTabs>
);

function Panels() {
  const [shown, setShown] = useState({ root: true, solid: true });
  const toggle = (k) => () => setShown((s) => ({ ...s, [k]: !s[k] }));
  return (
    <Sidebar>
      <Panel>
        <Pinned>ストラクチャー</Pinned>
        <PanelBody>
          <Tree>
            <TreeRow $indent={0} $bold>
              <Twisty />
              <label><Check type="checkbox" checked={shown.root} onChange={toggle("root")} /><Icon name="partDoc" size={9} />通信アンテナ</label>
            </TreeRow>
            <TreeRow $indent={18}>
              <label><Check type="checkbox" checked={shown.solid} onChange={toggle("solid")} /><Icon name="modeSolid" size={9} />Solid</label>
            </TreeRow>
          </Tree>
        </PanelBody>
        <Tabs items={["ストラクチャー", "ビュー"]} />
      </Panel>
      <Panel>
        <Pinned>プロパティ</Pinned>
        <PanelBody $framed />
        <Tabs items={["プロパティ", "レイヤ"]} />
      </Panel>
      <Panel>
        <Pinned>オプション - プル</Pinned>
        <PanelBody>
          <Section><Icon name="gear" size={8} />一般</Section>
          <Options>
            <OptionRow $gap={2}>
              <OptionButton><Icon name="plus" size={9} />追加</OptionButton>
              <OptionButton><Icon name="minus" size={9} />カット</OptionButton>
              <OptionButton><Icon name="ban" size={9} />マージなし</OptionButton>
            </OptionRow>
            <OptionRow $gap={1}>
              {["optArrow", "optCube", "optCross"].map((n, i) => (
                <OptionButton key={n} aria-label={n} $on={i === 0}><Icon name={n} /></OptionButton>
              ))}
              <OptionRow $gap={1}>
                {["optMeasure", "optBucket", "optScale"].map((n) => (
                  <OptionButton key={n} aria-label={n}><Icon name={n} /></OptionButton>
                ))}
              </OptionRow>
            </OptionRow>
            <OptionRow $gap={1}>
              {["grey1", "grey2", "grey3", "grey4", "grey5"].map((n) => (
                <OptionButton key={n} aria-label={n} disabled><Icon name={n} /></OptionButton>
              ))}
            </OptionRow>
          </Options>
        </PanelBody>
        <Tabs items={["オプション - プル", "選択"]} />
      </Panel>
    </Sidebar>
  );
}

/* ---------- design view ---------- */

const Documents = styled.main`
  display: flex;
  flex-direction: column;
  flex: 1;
  min-width: 0;
  padding: 2px 0 0 2px;
`;
const View = styled.div`
  position: relative;
  display: flex;
  flex-direction: column;
  flex: 1;
  margin-right: 2px;
  background: #fff;
  border: 1px solid #c9c6b6;
  padding: 4px 6px;
`;
const Scene = styled.svg`
  position: absolute;
  inset: 0;
  width: 100%;
  height: 100%;
`;
const Hint = styled.p`
  height: 9px;
  color: #666;
  margin-bottom: 5px;
`;
const ToolGuides = styled.div`
  display: grid;
  grid-template-columns: 18px 18px;
  gap: 3px 4px;
  z-index: 1;
  width: 40px;
  margin-top: ${(p) => p.$top}px;
`;
const Guide = styled.button`
  display: grid;
  place-items: center;
  width: ${(p) => (p.$large ? 26 : 18)}px;
  height: ${(p) => (p.$large ? 26 : 18)}px;
  background: #fff;
  border: 1px solid ${(p) => (p.$faint ? "#e6e6e6" : "#a2a2a2")};
  border-radius: ${(p) => (p.$large ? 4 : 3)}px;
`;
const Orientation = styled.svg`
  position: absolute;
  left: 18px;
  bottom: 16px;
  width: 38px;
  height: 40px;
`;
const ScaleBar = styled.div`
  position: absolute;
  right: 6px;
  bottom: 4px;
  width: 36px;
  border-top: 2px solid #8080e6;
  text-align: center;
  font-size: 6px;
  color: #5a5ae0;
`;

function Model() {
  return (
    <Scene viewBox="131 80 890 460" role="img" aria-label="通信アンテナ">
      <defs>
        <radialGradient id="dome" gradientUnits="userSpaceOnUse" cx="563" cy="208" r="88">
          <stop offset="0" stopColor="#dcffdc" />
          <stop offset=".18" stopColor="#cdfccd" />
          <stop offset=".5" stopColor="#b9e8ba" />
          <stop offset=".75" stopColor="#a4cda5" />
          <stop offset="1" stopColor="#7d9f7e" />
        </radialGradient>
        <linearGradient id="body">
          <stop offset="0" stopColor="#9fc6a1" />
          <stop offset=".1" stopColor="#aed7b0" />
          <stop offset=".28" stopColor="#b7e2b9" />
          <stop offset=".5" stopColor="#a9d1ab" />
          <stop offset=".75" stopColor="#91b493" />
          <stop offset=".93" stopColor="#718e72" />
          <stop offset="1" stopColor="#6d896e" />
        </linearGradient>
        <linearGradient id="neck">
          <stop offset="0" stopColor="#86a888" />
          <stop offset=".1" stopColor="#a3cba5" />
          <stop offset=".35" stopColor="#b7e2b9" />
          <stop offset=".6" stopColor="#a9d1ab" />
          <stop offset=".85" stopColor="#8eb090" />
          <stop offset="1" stopColor="#6f8b70" />
        </linearGradient>
        <linearGradient id="neckShade" x2="0" y2="1">
          <stop offset=".6" stopColor="#55775a" stopOpacity="0" />
          <stop offset="1" stopColor="#55775a" stopOpacity=".35" />
        </linearGradient>
        <linearGradient id="rimShade" x2="0" y2="1">
          <stop offset=".6" stopColor="#4c6e50" stopOpacity="0" />
          <stop offset=".85" stopColor="#4c6e50" stopOpacity=".15" />
          <stop offset="1" stopColor="#4c6e50" stopOpacity=".7" />
        </linearGradient>
        <radialGradient id="contact">
          <stop offset=".4" stopColor="#6b8e6e" stopOpacity=".75" />
          <stop offset=".65" stopColor="#84aa87" stopOpacity=".35" />
          <stop offset="1" stopColor="#b9e6bb" stopOpacity="0" />
        </radialGradient>
        <clipPath id="topFace"><path d="M456 434 544 358 696 402 608 478z" /></clipPath>
      </defs>
      <g strokeLinejoin="round" strokeWidth="1" stroke="#4f7553">
        <path d="M456 434 544 358 696 402 608 478z" fill="#b9e6bb" />
        <ellipse cx="576" cy="408" rx="84" ry="40" fill="url(#contact)" stroke="none" clipPath="url(#topFace)" />
        <path d="M456 434 608 478v39L456 473z" fill="#b7e2b9" />
        <path d="M608 478 696 402v39l-88 76z" fill="#738e74" />
      </g>
      <path d="M532 345v73a44 22 0 0 0 88 0v-73z" fill="url(#neck)" />
      <path d="M532 345v73a44 22 0 0 0 88 0v-73z" fill="url(#neckShade)" />
      <path d="M532 418a44 22 0 0 0 88 0" fill="none" stroke="#3f6545" />
      <path d="M510 319C511 334 519 344 532 351 556 363 596 363 620 351 633 344 641 334 642 319z" fill="url(#body)" />
      <path d="M510 319C511 334 519 344 532 351 556 363 596 363 620 351 633 344 641 334 642 319z" fill="url(#rimShade)" />
      <path d="M510 220v99a66 34 0 0 0 132 0v-99z" fill="url(#body)" />
      <path d="M510 319a66 34 0 0 0 132 0" fill="none" stroke="#4a7050" />
      <path d="M510 220a66 66 0 0 1 132 0 66 34 0 0 1-132 0z" fill="url(#dome)" />
      <path d="M510 220a66 34 0 0 0 132 0" fill="none" stroke="#4a7050" />
      <path d="M576 457v-16" stroke="#6d8ae0" strokeWidth="2" />
      <path d="M574 444l2-9 2 9z" fill="#3558d8" />
      <path d="M576 457l8-7" stroke="#2c8a34" />
      <path d="M581 449l8-4-4 7z" fill="#17851f" />
      <path d="M576 457l15 4" stroke="#e8503c" />
      <path d="M590 458l9 5-10 1z" fill="#ec1c10" />
      <g fontFamily="Liberation Sans, sans-serif" fontSize="6" fontWeight="bold" textAnchor="middle">
        <text x="576" y="431" fill="#3558d8">Z</text>
        <text x="592" y="445" fill="#3d8a45">Y</text>
        <text x="604" y="467" fill="#dd3a30">X</text>
      </g>
    </Scene>
  );
}

const guides = [["tPull", "プル方向"], ["tRevolve", "回転"], ["tDraft", "ドラフト"], ["tSweep", "スイープ"], ["tScale", "スケール"]];

function DesignView() {
  return (
    <View>
      <Model />
      <Hint>面を選択してドラッグし、オフセットします。エッジを選択してドラッグし、丸くします。</Hint>
      <ToolGuides $top={0}><Guide $large aria-label="選択"><Icon name="bigSelect" size={22} /></Guide></ToolGuides>
      <ToolGuides $top={7}>
        {guides.map(([n, l]) => <Guide key={n} aria-label={l}><Icon name={n} size={16} /></Guide>)}
      </ToolGuides>
      <ToolGuides $top={16}>
        <Guide aria-label="指定位置まで"><Icon name="tUpTo" size={16} /></Guide>
        <Guide $faint disabled aria-label="次へ"><Icon name="tNext" size={16} /></Guide>
      </ToolGuides>
      <ToolGuides $top={16}>
        <Guide $faint disabled aria-label="完了"><Icon name="tDone" size={16} /></Guide>
      </ToolGuides>
      <Orientation viewBox="0 0 38 40" aria-hidden="true">
        <path d="M5 22l8-4 7 3v10l-6 5-9-4z" fill="#dce6f4" stroke="#b9c8dc" strokeWidth=".8" />
        <path d="M14 25l6-4v10l-6 5z" fill="#c6d4e8" />
        <path d="M12 20v-8" stroke="#1414d8" strokeWidth="1.500" />
        <path d="M9 14l3-7 3 7z" fill="#1414d8" />
        <ellipse cx="12" cy="21" rx="2.600" ry="2" fill="#1414d8" />
        <circle cx="9" cy="28" r="2.500" fill="#1b8a2a" />
        <ellipse cx="17" cy="27" rx="2" ry="2.800" fill="#d81c1c" />
        <path d="M20 28l4 1" stroke="#e81c1c" strokeWidth="1.500" />
        <path d="M24 26l6 4-7 1z" fill="#e81c1c" />
        <g fontFamily="Liberation Sans, sans-serif" fontSize="6" fontWeight="bold" textAnchor="middle">
          <text x="12" y="5" fill="#1414d8">Z</text>
          <text x="20" y="19" fill="#1b8a2a">Y</text>
          <text x="33" y="33" fill="#e81c1c">X</text>
        </g>
      </Orientation>
      <ScaleBar>0.4mm</ScaleBar>
    </View>
  );
}

const DocTabs = styled.nav`
  display: flex;
  height: 14px;
  margin-top: 1px;
  padding-right: 3px;
  background: ${(p) => p.theme.panel};
  border-top: 1px solid #cfcfd6;
`;
const DocTab = styled.button`
  display: flex;
  align-items: center;
  gap: 3px;
  height: 12px;
  padding: 0 3px;
  min-width: ${(p) => (p.$active ? 55 : 60)}px;
  font-size: 6px;
  font-weight: ${(p) => (p.$active ? "bold" : "normal")};
  color: ${(p) => (p.$active ? "#336d96" : "#222")};
  background: ${(p) => (p.$active ? "#e3e9f0" : "#fff")};
  border: solid #9bb0c2;
  border-width: 0 ${(p) => (p.$active ? "1px 1px 1px" : "0")};
`;
const DocNav = styled.div`
  display: flex;
  align-items: center;
  gap: 2px;
  margin-left: auto;
`;

/* ---------- status ---------- */

const Status = styled.footer`
  display: flex;
  align-items: stretch;
  height: 19px;
  padding: 2px 11px 3px 5px;
  border-top: 1px solid #c9d6e0;
  background: ${(p) => p.theme.blue};
  color: #f2f6fa;
`;
const StatusText = styled.p`
  flex: 1;
  align-self: center;
  font-size: 6px;
`;
const StatusCell = styled.div`
  display: flex;
  align-items: center;
  justify-content: ${(p) => (p.$end ? "flex-end" : "flex-start")};
  gap: 2px;
  width: ${(p) => p.$width}px;
  padding-left: 3px;
  border-left: 1px solid #5c86a9;
`;
const StatusDivider = styled.span`
  width: 1px;
  height: 12px;
  background: #5c86a9;
`;

export default function App() {
  return (
    <ThemeProvider theme={theme}>
      <Global />
      <Window>
        <Header>
          <TitleRow>
            <QuickBar>
              <Icon name="app" />
              <QuickDivider />
              <IconButton aria-label="開く"><Icon name="folder" /></IconButton>
              <IconButton aria-label="保存"><Icon name="save" size={8} /></IconButton>
              <IconButton aria-label="元に戻す"><Icon name="undo" /><Caret $light /></IconButton>
              <IconButton aria-label="やり直し"><Icon name="redo" /><Caret $light /></IconButton>
              <IconButton aria-label="カスタマイズ"><Icon name="customise" size={6} /></IconButton>
            </QuickBar>
            <Title>通信アンテナ - DesignSpark Mechanical Explorer</Title>
            <WindowButtons>
              <IconButton aria-label="最小化"><Icon name="minimise" size={7} /></IconButton>
              <IconButton aria-label="元のサイズ"><Icon name="restore" size={7} /></IconButton>
              <IconButton aria-label="閉じる"><Icon name="close" size={7} /></IconButton>
            </WindowButtons>
          </TitleRow>
          <TabRow>
            <RibbonTab>ファイル</RibbonTab>
            <RibbonTab $active>デザイン</RibbonTab>
            <RibbonTab>表示</RibbonTab>
            <RibbonTab>測定</RibbonTab>
            <RibbonTab>ヘルプ/リソース</RibbonTab>
            <TabTools>
              <IconButton aria-label="リボンを閉じる"><Caret $up $light /></IconButton>
              <IconButton aria-label="ヘルプ"><Icon name="help" size={9} /></IconButton>
            </TabTools>
          </TabRow>
        </Header>
        <RibbonBar />
        <Work>
          <Panels />
          <Documents>
            <DesignView />
            <DocTabs>
              <DocTab><Icon name="startDoc" size={9} />スタートページ</DocTab>
              <DocTab $active><Icon name="partDoc" size={9} />通信アンテナ<span>×</span></DocTab>
              <DocNav>
                <IconButton aria-label="前のタブ"><Icon name="navLeft" size={5} /></IconButton>
                <IconButton aria-label="次のタブ"><Icon name="navRight" size={5} /></IconButton>
                <IconButton aria-label="タブを閉じる"><Icon name="navClose" size={5} /></IconButton>
              </DocNav>
            </DocTabs>
          </Documents>
        </Work>
        <Status>
          <StatusText>面を選択してドラッグし、オフセットします。エッジを選択してドラッグし、丸くします。</StatusText>
          <StatusCell $width={81} />
          <StatusCell $width={19}><Icon name="warn" size={8} /><Caret $up $light /></StatusCell>
          <StatusCell $width={81} />
          <StatusCell $width={258} $end>
            <IconButton aria-label="スクロール"><Icon name="updown" /></IconButton>
            <IconButton aria-label="選択に戻る"><Icon name="sArrowBack" /></IconButton>
            <IconButton aria-label="選択"><Icon name="sArrow" /><Caret $up $light /></IconButton>
            <IconButton aria-label="ボックス選択"><Icon name="sBox" /><Caret $up $light /></IconButton>
            <StatusDivider />
            <IconButton aria-label="スピン"><Icon name="sSpin" /><Caret $up $light /></IconButton>
            <IconButton aria-label="パン"><Icon name="sPan" /></IconButton>
            <IconButton aria-label="ズーム"><Icon name="sZoom" /><Caret $up $light /></IconButton>
            <IconButton aria-label="前のビュー"><Icon name="sPrev" /></IconButton>
            <IconButton aria-label="次のビュー"><Icon name="sNext" /></IconButton>
          </StatusCell>
        </Status>
      </Window>
    </ThemeProvider>
  );
}
